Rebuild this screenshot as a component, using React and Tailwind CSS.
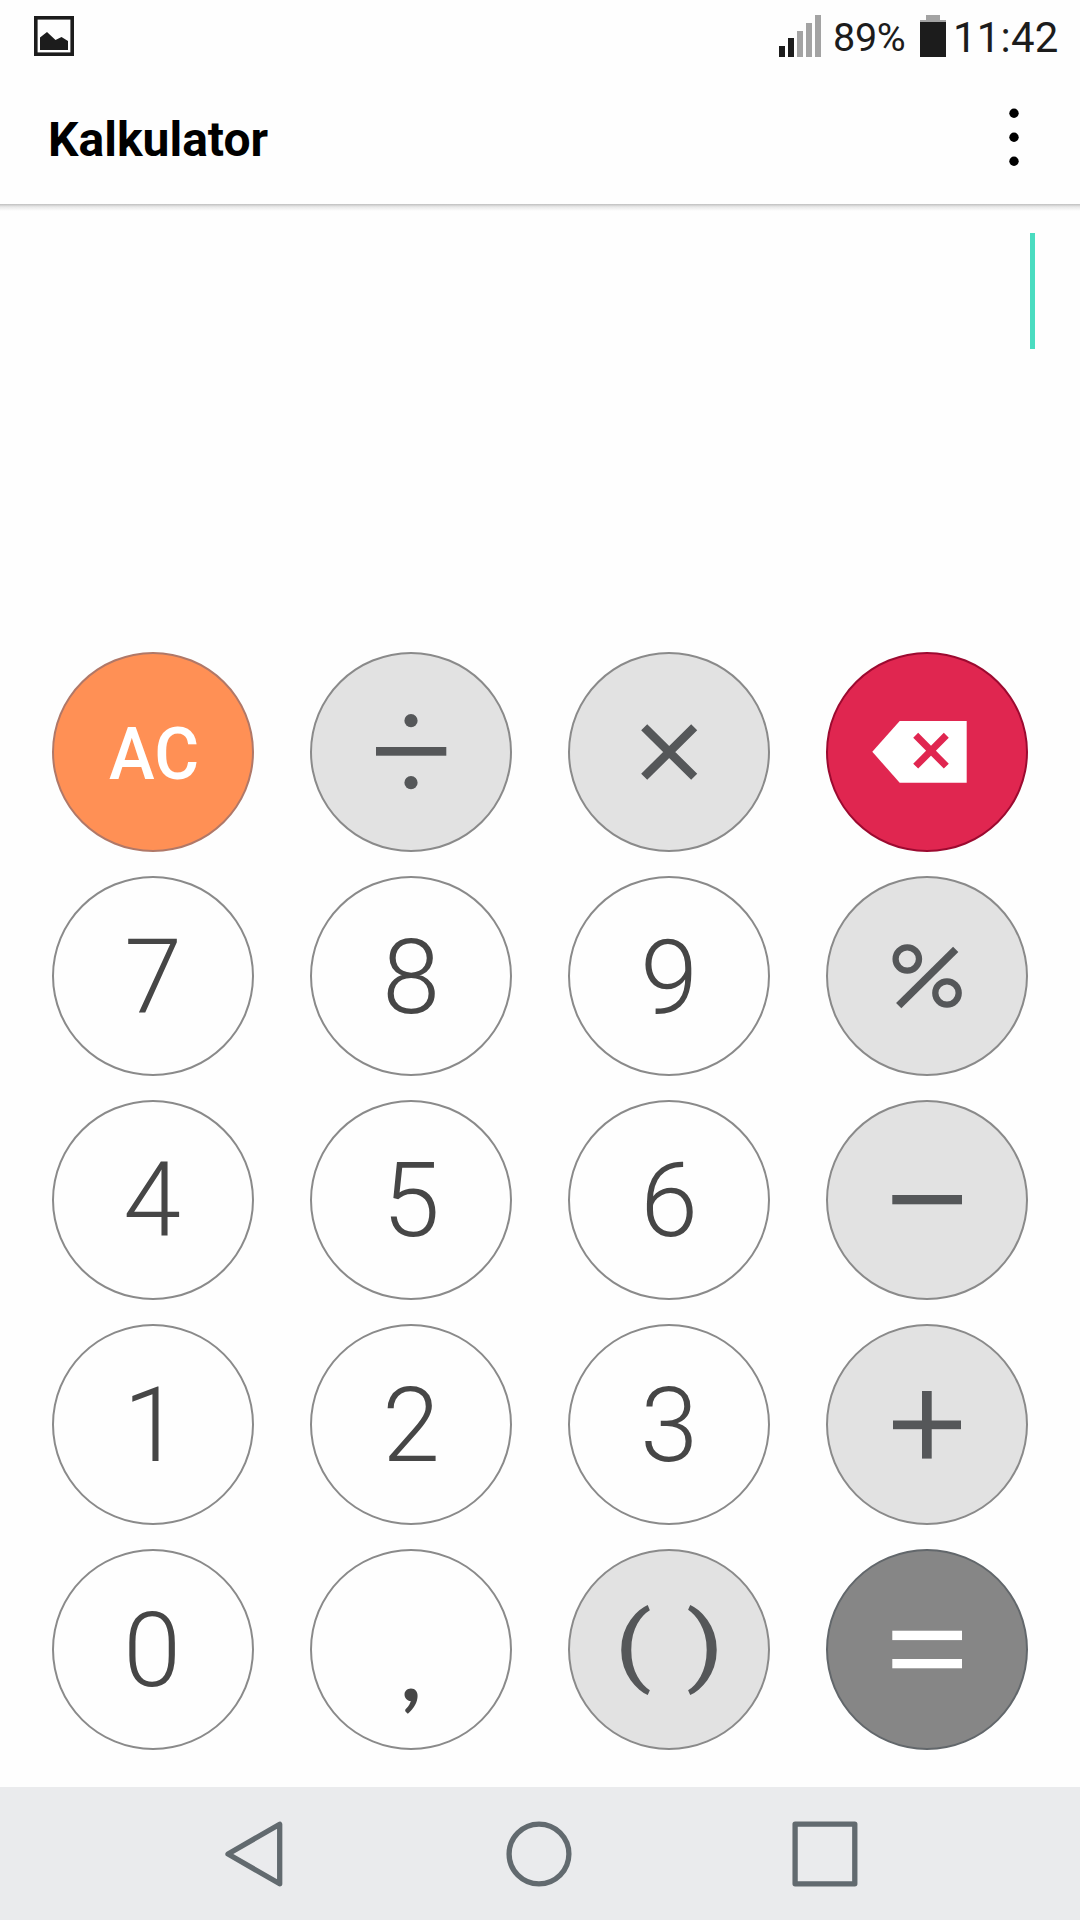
const INK = '#555759';

function ImageIcon() {
  return (
    <svg className="h-10 w-10" viewBox="0 0 40 40">
      <rect x="1.8" y="1.8" width="36.4" height="36.4" fill="none" stroke="#1c1c1c" strokeWidth="3.6" />
      <path d="M6 34V21.5L13 16l8.500 8 6-3L34 25v9z" fill="#1c1c1c" />
    </svg>
  );
}

function StatusBar() {
  return (
    <div className="flex h-[72px] items-start justify-between pl-[34px] pr-[21px] pt-[15px] text-[#1c1c1c]">
      <div className="pt-px">
        <ImageIcon />
      </div>
      <div className="flex items-start">
        <svg className="h-[42px] w-[42px]" viewBox="0 0 42 42">
          <rect x="0" y="31" width="6" height="11" fill="#1c1c1c" />
          <rect x="9" y="23" width="6" height="19" fill="#1c1c1c" />
          <rect x="18" y="16" width="6" height="26" fill="#a3a3a3" />
          <rect x="27" y="8" width="6" height="34" fill="#a3a3a3" />
          <rect x="36" y="0" width="6" height="42" fill="#a3a3a3" />
        </svg>
        <span className="ml-3 w-[87px] whitespace-nowrap pt-px text-[39.500px] leading-[44px] tracking-[-0.3px]">89%</span>
        <svg className="h-[42px] w-[26px]" viewBox="0 0 26 42">
          <path d="M6 0h14v5h6v2H0V5h6z" fill="#a3a3a3" />
          <rect x="0" y="7" width="26" height="35" fill="#1c1c1c" />
        </svg>
        <span className="ml-[7px] w-[106px] whitespace-nowrap pt-px text-[42px] leading-[44px] tracking-[0.2px]">11:42</span>
      </div>
    </div>
  );
}

function Header() {
  return (
    <header className="flex h-[132px] items-center justify-between bg-[#fefefe] pl-12 pr-[61px]">
      <h1 className="pt-1 text-[48px] font-bold leading-[56px] text-black">Kalkulator</h1>
      <svg className="h-[60px] w-[10px]" viewBox="0 0 10 60">
        <circle cx="5" cy="5.300" r="4.700" />
        <circle cx="5" cy="29.300" r="4.700" />
        <circle cx="5" cy="53.300" r="4.700" />
      </svg>
    </header>
  );
}

function Symbol({ children }) {
  return (
    <svg className="h-[200px] w-[202px] shrink-0" viewBox="0 0 202 200">
      {children}
    </svg>
  );
}

function Digit({ children, shift }) {
  return (
    <span className={`text-[104px] font-light leading-[120px] text-[#464646] ${shift}`}>{children}</span>
  );
}

const light = 'border-[#8a8a8a] bg-[#e2e2e2]';
const plain = 'border-[#8a8a8a] bg-[#fefefe]';

const digit = (n, shift = 'translate-y-[2px]') => ({
  name: n,
  tone: plain,
  face: <Digit shift={shift}>{n}</Digit>,
});

const ROWS = [
  [
    {
      name: 'AC',
      tone: 'border-[#b07868] bg-[#ff9055]',
      face: (
        <span className="translate-x-px translate-y-[3px] scale-x-[0.955] text-[72px] font-medium leading-[84px] text-white">
          AC
        </span>
      ),
    },
    {
      name: 'divide',
      tone: light,
      face: (
        <Symbol>
          <circle cx="101" cy="68.700" r="6.600" fill={INK} />
          <rect x="66" y="95" width="70.300" height="8.700" fill={INK} />
          <circle cx="101" cy="130.700" r="6.600" fill={INK} />
        </Symbol>
      ),
    },
    {
      name: 'multiply',
      tone: light,
      face: (
        <Symbol>
          <path d="M76.200 75.200l50 49.600m0-49.600l-50 49.600" stroke={INK} strokeWidth="8.600" />
        </Symbol>
      ),
    },
    {
      name: 'backspace',
      tone: 'border-[#9c0a30] bg-[#e02650]',
      face: (
        <Symbol>
          <path d="M46.300 99.800L73.700 69h67v61.700h-67z" fill="#fff" />
          <path d="M89.700 83.300l30.600 30.800m0-30.800l-30.600 30.800" stroke="#e02650" strokeWidth="7" />
        </Symbol>
      ),
    },
  ],
  [
    digit('7'),
    digit('8'),
    digit('9'),
    {
      name: 'percent',
      tone: light,
      face: (
        <Symbol>
          <g fill="none" stroke={INK}>
            <circle cx="81.300" cy="83" r="11.700" strokeWidth="6.300" />
            <circle cx="121" cy="117" r="11.700" strokeWidth="6.300" />
            <path d="M72.700 129.700l57-56.400" strokeWidth="7.500" />
          </g>
        </Symbol>
      ),
    },
  ],
  [
    digit('4', '-translate-x-px translate-y-px'),
    digit('5', 'translate-y-px'),
    digit('6', 'translate-y-px'),
    {
      name: 'minus',
      tone: light,
      face: (
        <Symbol>
          <rect x="66.300" y="95" width="69.700" height="9.300" fill={INK} />
        </Symbol>
      ),
    },
  ],
  [
    digit('1', '-translate-x-px translate-y-px'),
    digit('2', 'translate-y-px'),
    digit('3', 'translate-y-px'),
    {
      name: 'plus',
      tone: light,
      face: (
        <Symbol>
          <rect x="67" y="95.500" width="68" height="8.700" fill={INK} />
          <rect x="96" y="66" width="9.700" height="67.600" fill={INK} />
        </Symbol>
      ),
    },
  ],
  [
    digit('0', '-translate-x-px translate-y-px'),
    {
      name: 'comma',
      tone: plain,
      face: (
        <span className="translate-y-[17px] font-[Lato,sans-serif] text-[88px] font-bold leading-[120px] text-[#464646]">
          ,
        </span>
      ),
    },
    {
      name: 'brackets',
      tone: light,
      face: (
        <span className="flex -translate-y-[5px] gap-[42px] text-[88px] leading-[100px] text-[#555759]">
          <span className="scale-x-[1.26]">(</span>
          <span className="scale-x-[1.26]">)</span>
        </span>
      ),
    },
    {
      name: 'equals',
      tone: 'border-[#62676b] bg-[#868686]',
      face: (
        <Symbol>
          <rect x="66.300" y="80.700" width="69.700" height="9.400" fill="#fff" />
          <rect x="66.300" y="109" width="69.700" height="9.300" fill="#fff" />
        </Symbol>
      ),
    },
  ],
];

function Keypad() {
  return (
    <div className="grid grid-cols-[repeat(4,202px)] grid-rows-[200px_200px_200px_201px_201px] gap-x-[56px] gap-y-[24px] pl-[52px]">
      {ROWS.flat().map((key) => (
        <button
          key={key.name}
          aria-label={key.name}
          className={`flex h-full w-full items-center justify-center rounded-[50%] border-2 ${key.tone}`}
        >
          {key.face}
        </button>
      ))}
    </div>
  );
}

function NavBar() {
  return (
    <nav className="flex h-[133px] items-center justify-between bg-[#eaebed] pl-[224px] pr-[221px]">
      <svg className="h-[68px] w-[60px]" viewBox="0 0 60 68" fill="none" stroke="#626a6f" strokeWidth="5.300" strokeLinejoin="round">
        <path d="M4 34L55.700 4.200v59.600z" />
      </svg>
      <svg className="h-[68px] w-[68px] translate-x-px" viewBox="0 0 68 68" fill="none" stroke="#626a6f" strokeWidth="5.300">
        <circle cx="34" cy="34" r="29.900" />
      </svg>
      <svg className="h-[68px] w-[68px]" viewBox="0 0 68 68" fill="none" stroke="#626a6f" strokeWidth="5.300" strokeLinejoin="round">
        <rect x="4.100" y="4.100" width="59.700" height="59.700" />
      </svg>
    </nav>
  );
}

export default function App() {
  return (
    <div className="flex h-[1920px] w-[1080px] flex-col overflow-hidden bg-[#fefefe] font-[Roboto,sans-serif]">
      <StatusBar />
      <Header />
      <div className="h-[7px] shrink-0 bg-linear-to-b from-[#bfbfbf] via-[#e8e8e8] via-40% to-[#fefefe]" />
      <div className="flex h-[441px] justify-end pr-[45px] pt-[22px]">
        <div className="h-[116px] w-[5px] bg-[#4adcc0]" />
      </div>
      <div className="flex-1">
        <Keypad />
      </div>
      <NavBar />
    </div>
  );
}
